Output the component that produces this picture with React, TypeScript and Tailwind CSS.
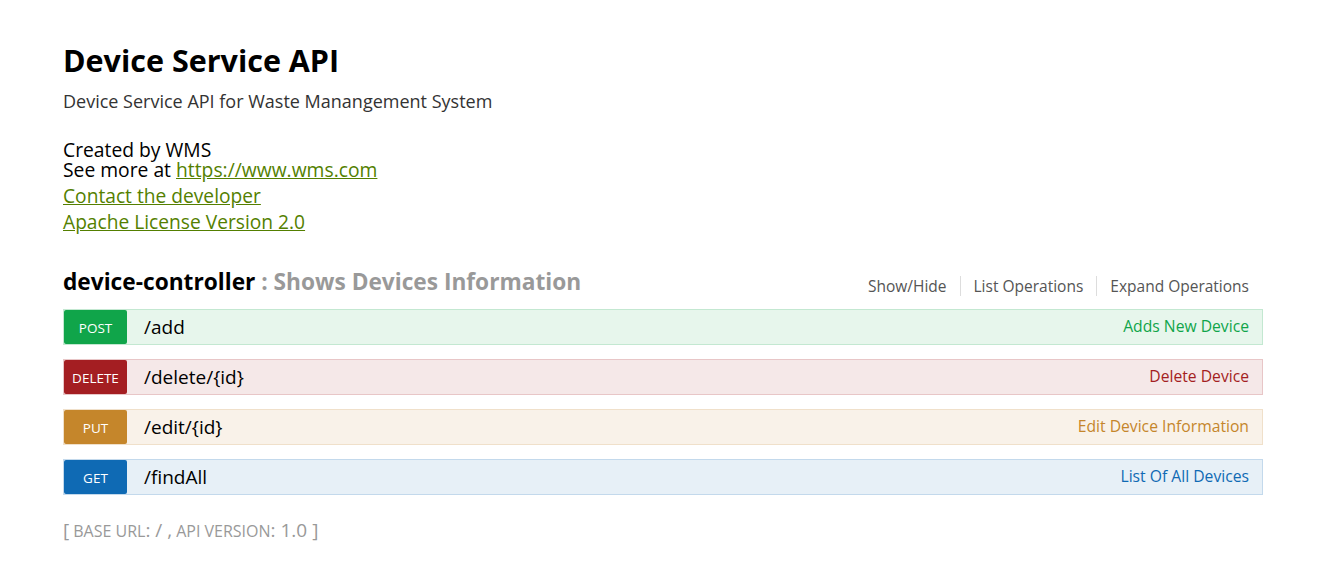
const OPS = [
  {
    method: "POST",
    path: "/add",
    summary: "Adds New Device",
    row: "bg-[#e7f6ec] border-[#c3e8d1]",
    badge: "bg-[#10a54a]",
    text: "text-[#10a54a]",
  },
  {
    method: "DELETE",
    path: "/delete/{id}",
    summary: "Delete Device",
    row: "bg-[#f5e8e8] border-[#e8c6c7]",
    badge: "bg-[#a41e22]",
    text: "text-[#a41e22]",
  },
  {
    method: "PUT",
    path: "/edit/{id}",
    summary: "Edit Device Information",
    row: "bg-[#f9f2e9] border-[#f0e0ca]",
    badge: "bg-[#c5862b]",
    text: "text-[#c5862b]",
  },
  {
    method: "GET",
    path: "/findAll",
    summary: "List Of All Devices",
    row: "bg-[#e7f0f7] border-[#c3d9ec]",
    badge: "bg-[#0f6ab4]",
    text: "text-[#0f6ab4]",
  },
];

export default function App() {
  return (
    <div className="min-h-[574px] bg-white font-['Open_Sans','Noto_Sans',sans-serif]">
      <div className="w-[1200px] ml-[63px] pt-[38px]">
        <h1 className="text-[30.5px] font-bold leading-[44px] text-black">Device Service API</h1>
        <p className="text-[18px] leading-[24px] text-[#333] mt-[7px]">
          Device Service API for Waste Manangement System
        </p>

        <div className="mt-[27px] text-[19.3px] leading-[20px] text-black">
          <div>Created by WMS</div>
          <div>
            See more at{" "}
            <a href="#" className="text-[#547f00] underline">https://www.wms.com</a>
          </div>
        </div>
        <div className="mt-[3px] text-[19.2px] leading-[26px]">
          <div>
            <a href="#" className="text-[#547f00] underline">Contact the developer</a>
          </div>
          <div>
            <a href="#" className="text-[#547f00] underline">Apache License Version 2.0</a>
          </div>
        </div>

        <div className="mt-[32px] flex items-end justify-between">
          <h2 className="text-[22.7px] font-bold leading-[30px] text-black">
            device-controller
            <span className="text-[#999]"> : Shows Devices Information</span>
          </h2>
          <ul className="flex items-center text-[15.5px] text-[#555] mr-[14px] mb-[1px]">
            <li className="pr-[13px] border-r border-[#ddd] leading-[20px]">Show/Hide</li>
            <li className="px-[13px] border-r border-[#ddd] leading-[20px]">List Operations</li>
            <li className="pl-[13px] leading-[20px]">Expand Operations</li>
          </ul>
        </div>

        <div className="mt-[12px] flex flex-col gap-[14px]">
          {OPS.map((op) => (
            <div
              key={op.method}
              className={`h-[36px] border flex items-center justify-between ${op.row}`}
            >
              <div className="flex items-center h-full">
                <span
                  className={`w-[63px] h-[34px] pt-[2px] rounded-[2px] flex items-center justify-center text-white text-[13.5px] ${op.badge}`}
                >
                  {op.method}
                </span>
                <span className="ml-[17px] text-[19px] text-black">{op.path}</span>
              </div>
              <span className={`text-[15.7px] mr-[13px] ${op.text}`}>{op.summary}</span>
            </div>
          ))}
        </div>

        <div className="mt-[21px] leading-[28px] text-[#999] flex items-baseline gap-[4px]">
          <span className="text-[19px]">[</span>
          <span className="text-[16px]">BASE URL</span>
          <span className="text-[19px] -ml-[4px]">: / ,</span>
          <span className="text-[16px]">API VERSION</span>
          <span className="text-[19px] -ml-[4px]">: 1.0 ]</span>
        </div>
      </div>
    </div>
  );
}
